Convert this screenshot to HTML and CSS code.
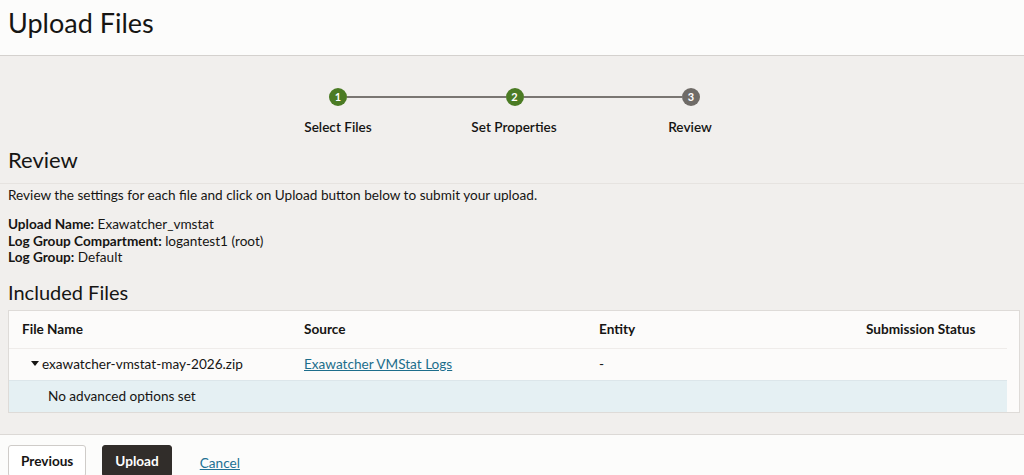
FILE: index.html
```html
<!DOCTYPE html>
<html lang="en">
<head>
    <meta charset="UTF-8">
    <meta name="viewport" content="width=device-width, initial-scale=1.0">
    <title>Upload Files</title>
    <link rel="stylesheet" href="styles.css">
</head>
<body>
    <header class="page-header">
        <h1>Upload Files</h1>
    </header>

    <main class="page-body">
        <!-- Step train -->
        <div class="train">
            <div class="train-track">
                <span class="step-dot done">1</span>
                <span class="step-line"></span>
                <span class="step-dot done">2</span>
                <span class="step-line"></span>
                <span class="step-dot current">3</span>
            </div>
            <div class="train-labels">
                <span>Select Files</span>
                <span>Set Properties</span>
                <span>Review</span>
            </div>
        </div>

        <h2 class="section-title">Review</h2>
        <p class="intro">Review the settings for each file and click on Upload button below to submit your upload.</p>

        <div class="summary">
            <div><span class="summary-label">Upload Name:</span> Exawatcher_vmstat</div>
            <div><span class="summary-label">Log Group Compartment:</span> logantest1 (root)</div>
            <div><span class="summary-label">Log Group:</span> Default</div>
        </div>

        <h3 class="sub-title">Included Files</h3>

        <div class="table-wrap">
            <table class="files-table">
                <colgroup>
                    <col class="col-name">
                    <col class="col-source">
                    <col class="col-entity">
                    <col class="col-status">
                </colgroup>
                <thead>
                    <tr>
                        <th>File Name</th>
                        <th>Source</th>
                        <th>Entity</th>
                        <th>Submission Status</th>
                    </tr>
                </thead>
                <tbody>
                    <tr class="file-row">
                        <td class="file-name"><span class="caret"></span>exawatcher-vmstat-may-2026.zip</td>
                        <td><a href="#">Exawatcher VMStat Logs</a></td>
                        <td>-</td>
                        <td></td>
                    </tr>
                    <tr class="detail-row">
                        <td colspan="4">No advanced options set</td>
                    </tr>
                </tbody>
            </table>
        </div>
    </main>

    <footer class="page-footer">
        <button class="btn btn-outline">Previous</button>
        <button class="btn btn-dark">Upload</button>
        <a href="#" class="cancel-link">Cancel</a>
    </footer>
</body>
</html>
```

FILE: styles.css
```css
body {
    margin: 0;
    font-family: Lato, "Open Sans", sans-serif;
    font-size: 13.6px;
    color: #161513;
    background-color: #f1efed;
}

/* Header */
.page-header {
    height: 55px;
    background-color: #fcfcfb;
    border-bottom: 1px solid #d4d1ce;
    padding: 0 8px;
}
.page-header h1 {
    margin: 0;
    padding-top: 6px;
    font-size: 27px;
    line-height: 34px;
    font-weight: 400;
}

/* Body */
.page-body {
    padding: 32px 4px 21px 8px;
}

/* Train */
.train-track {
    display: flex;
    align-items: center;
    width: 371px;
    margin-left: 321px;
}
.step-dot {
    width: 18px;
    height: 18px;
    border-radius: 50%;
    color: #fff;
    font-size: 11px;
    font-weight: 700;
    line-height: 18px;
    text-align: center;
    flex-shrink: 0;
}
.step-dot.done {
    background-color: #4b7b24;
}
.step-dot.current {
    background-color: #6f6b67;
}
.step-line {
    flex: 1;
    height: 2px;
    background-color: #7a7672;
}
.train-labels {
    display: grid;
    grid-template-columns: 176px 176px 176px;
    margin-left: 242px;
    margin-top: 12px;
    line-height: 18px;
    font-weight: 600;
}
.train-labels span {
    text-align: center;
}

/* Review */
.section-title {
    margin: 10px -4px 0 -8px;
    padding: 0 8px 9px;
    font-size: 22px;
    line-height: 28px;
    font-weight: 400;
    border-bottom: 1px solid #e6e3e0;
}
.intro {
    margin: 2px 0 0;
    line-height: 18px;
}
.summary {
    margin-top: 12px;
    line-height: 16.5px;
}
.summary-label {
    font-weight: 700;
}
.sub-title {
    margin: 13px 0 0;
    font-size: 20px;
    line-height: 26px;
    font-weight: 400;
}

/* Table */
.table-wrap {
    margin-top: 5px;
    background-color: #fcfbfa;
    border: 1px solid #dedbd8;
    padding-right: 12px;
}
.files-table {
    width: 100%;
    border-collapse: collapse;
    table-layout: fixed;
}
.col-name { width: 282px; }
.col-source { width: 295px; }
.col-entity { width: 267px; }
.files-table th {
    text-align: left;
    font-weight: 700;
    height: 37px;
    padding: 0 0 0 13px;
    border-bottom: 1px solid #efecea;
}
.files-table td {
    height: 31px;
    padding: 0 0 0 13px;
}
.files-table td.file-name {
    padding-left: 22px;
}
.caret {
    display: inline-block;
    width: 0;
    height: 0;
    border-left: 4px solid transparent;
    border-right: 4px solid transparent;
    border-top: 5px solid #161513;
    margin-right: 3px;
    vertical-align: 3px;
}
.files-table a {
    color: #1d6e8c;
}
.detail-row td {
    background-color: #e5f0f3;
    border-top: 1px solid #dce6ea;
    padding-left: 39px;
}

/* Footer */
.page-footer {
    background-color: #fcfcfb;
    border-top: 1px solid #dcd9d6;
    padding: 10px 8px;
    display: flex;
    align-items: center;
    gap: 16px;
}
.btn {
    font-family: inherit;
    font-size: 13.6px;
    font-weight: 700;
    height: 32px;
    padding: 0 12px;
    border-radius: 3px;
    cursor: pointer;
}
.btn-outline {
    background-color: #fff;
    color: #161513;
    border: 1px solid #cfccc9;
}
.btn-dark {
    background-color: #312d2a;
    color: #fff;
    border: 1px solid #312d2a;
}
.cancel-link {
    margin-left: 12px;
    color: #227194;
    margin-top: 4px;
}
```
